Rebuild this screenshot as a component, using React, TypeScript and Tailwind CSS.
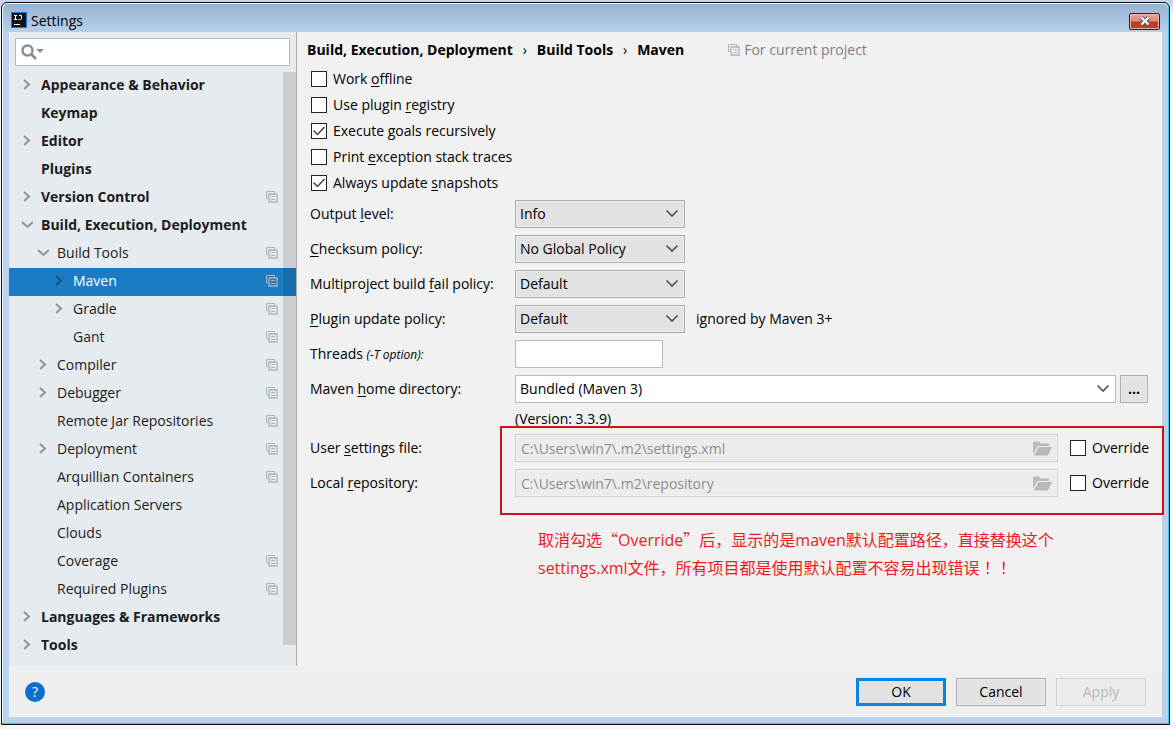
import React, { useState } from "react";

type TreeItem = {
  label: string;
  level: 0 | 1 | 2;
  state?: "open" | "closed";
  project?: boolean;
};

const TREE: TreeItem[] = [
  { label: "Appearance & Behavior", level: 0, state: "closed" },
  { label: "Keymap", level: 0 },
  { label: "Editor", level: 0, state: "closed" },
  { label: "Plugins", level: 0 },
  { label: "Version Control", level: 0, state: "closed", project: true },
  { label: "Build, Execution, Deployment", level: 0, state: "open" },
  { label: "Build Tools", level: 1, state: "open", project: true },
  { label: "Maven", level: 2, state: "closed", project: true },
  { label: "Gradle", level: 2, state: "closed", project: true },
  { label: "Gant", level: 2, project: true },
  { label: "Compiler", level: 1, state: "closed", project: true },
  { label: "Debugger", level: 1, state: "closed", project: true },
  { label: "Remote Jar Repositories", level: 1, project: true },
  { label: "Deployment", level: 1, state: "closed", project: true },
  { label: "Arquillian Containers", level: 1, project: true },
  { label: "Application Servers", level: 1 },
  { label: "Clouds", level: 1 },
  { label: "Coverage", level: 1, project: true },
  { label: "Required Plugins", level: 1, project: true },
  { label: "Languages & Frameworks", level: 0, state: "closed" },
  { label: "Tools", level: 0, state: "closed" },
];

const INDENT = ["pl-3", "pl-7", "pl-11"];

function ProjectIcon() {
  return (
    <svg width="12" height="12" viewBox="0 0 12 12" fill="none" stroke="#a9b4bc" className="shrink-0" aria-hidden="true">
      <path d="M2.500 7.500h-2v-7h8v2" />
      <path d="M3 3h8v8H3z" strokeWidth="1.300" />
      <path d="M5 5.500h4M5 8.500h4" />
    </svg>
  );
}

function TreeArrow({ state, selected }: { state?: "open" | "closed"; selected: boolean }) {
  return (
    <svg
      width="12"
      height="12"
      viewBox="0 0 12 12"
      fill="none"
      stroke={selected ? "#17517f" : "#8f9396"}
      strokeWidth="2"
      className="shrink-0"
      aria-hidden="true"
    >
      {state === "closed" && <path d="M3 1 8 5.500 3 10" />}
      {state === "open" && <path d="M1 3l5.500 5L12 3" />}
    </svg>
  );
}

function ComboArrow() {
  return (
    <svg
      width="14"
      height="9"
      viewBox="0 0 14 9"
      fill="none"
      stroke="#555"
      strokeWidth="1.700"
      className="pointer-events-none absolute top-[9px] right-1.5"
      aria-hidden="true"
    >
      <path d="M1.500 1.500 7 7l5.500-5.500" />
    </svg>
  );
}

function Mnemonic({ text }: { text: string }) {
  const [before, key, after] = text.split("_");
  return (
    <>
      {before}
      <span className="underline underline-offset-2">{key}</span>
      {after}
    </>
  );
}

function Check({ text, initial = false }: { text: React.ReactNode; initial?: boolean }) {
  const [checked, setChecked] = useState(initial);
  return (
    <label className="flex items-center gap-1.5 pl-px whitespace-nowrap">
      <span className="relative flex">
        <input
          type="checkbox"
          checked={checked}
          onChange={(e) => setChecked(e.target.checked)}
          className="size-4 appearance-none border border-[#222] bg-white"
        />
        {checked && (
          <svg
            width="16"
            height="16"
            viewBox="0 0 16 16"
            fill="none"
            stroke="#444"
            strokeWidth="1.500"
            className="pointer-events-none absolute inset-0"
            aria-hidden="true"
          >
            <path d="M2.500 7.500l4 4 7-7.500" />
          </svg>
        )}
      </span>
      <span>{text}</span>
    </label>
  );
}

function Row({ id, label, children }: { id: string; label: React.ReactNode; children: React.ReactNode }) {
  return (
    <div className="flex h-7 items-center">
      <label htmlFor={id} className="w-[205px] shrink-0 whitespace-nowrap">
        {label}
      </label>
      {children}
    </div>
  );
}

function Combo({ id, options }: { id: string; options: string[] }) {
  return (
    <span className="relative w-[170px]">
      <select
        id={id}
        className="block h-7 w-full appearance-none border border-[#adadad] bg-[#e2e2e2] pr-6 pl-1 shadow-[inset_0_0_0_1px_#ebebeb]"
      >
        {options.map((o) => (
          <option key={o}>{o}</option>
        ))}
      </select>
      <ComboArrow />
    </span>
  );
}

function PathRow({ id, label, value }: { id: string; label: string; value: string }) {
  return (
    <Row id={id} label={<Mnemonic text={label} />}>
      <span className="relative grow">
        <input
          id={id}
          disabled
          value={value}
          className="block h-7 w-full border border-[#cfcfcf] bg-[#ececec] pr-8 pl-[5px] text-[#8c8c8c] shadow-[inset_0_0_0_1px_#f1f1f1]"
        />
        <svg
          width="19"
          height="15"
          viewBox="0 0 19 15"
          fill="#b4babd"
          className="absolute top-[7px] right-1.5"
          aria-hidden="true"
        >
          <path d="M0 .5h6l1.500 2H16v2.500H4.500L0 13z" />
          <path d="M5.500 6H19l-4 8.500H.8z" />
        </svg>
      </span>
      <span className="ml-[11px] w-[79px]">
        <Check text="Override" />
      </span>
    </Row>
  );
}

function Sidebar() {
  const [selected, setSelected] = useState("Maven");
  return (
    <nav className="flex w-72 shrink-0 flex-col border-r border-[#a9a9a9] bg-[#e6ebef]">
      <label className="relative mx-1.5 mt-1.5 mb-1.5 flex">
        <input
          aria-label="Search settings"
          className="h-7 w-full border border-[#b5babd] bg-white pl-8 outline-none"
        />
        <svg
          width="23"
          height="16"
          viewBox="0 0 23 16"
          fill="none"
          className="pointer-events-none absolute top-1.5 left-1.5"
          aria-hidden="true"
        >
          <circle cx="6.500" cy="6.500" r="5" stroke="#8c8c8c" strokeWidth="2.400" />
          <path d="m10 10 5 5" stroke="#8c8c8c" strokeWidth="2.600" />
          <path d="M15 5h8l-4 4z" fill="#8c8c8c" />
        </svg>
      </label>
      <div className="relative pb-1.5">
        <ul>
          {TREE.map((item) => {
            const active = item.label === selected;
            return (
              <li key={item.label}>
                <button
                  onClick={() => setSelected(item.label)}
                  className={`flex h-7 w-full items-center pr-[18px] pb-0.5 text-left whitespace-nowrap ${INDENT[item.level]} ${
                    item.level === 0 ? "font-bold" : ""
                  } ${active ? "bg-[#1b7cc3] text-white" : "text-[#1c1c1c]"}`}
                >
                  <TreeArrow state={item.state} selected={active} />
                  <span className="ml-2 grow">{item.label}</span>
                  {item.project && <ProjectIcon />}
                </button>
              </li>
            );
          })}
        </ul>
        <div className="pointer-events-none absolute top-0 right-0 bottom-[21px] w-[13px] bg-[#00000b]/12" />
      </div>
    </nav>
  );
}

function MavenPage() {
  const policies = ["Default", "Always", "Never"];
  return (
    <main className="min-w-0 grow bg-[#f1f1f1] pr-3.5 pl-[13px] text-black">
      <header className="-ml-[3px] flex h-9 items-center whitespace-nowrap">
        <h1 className="flex font-bold">
          <span>Build, Execution, Deployment</span>
          <span className="w-6 text-center font-normal">›</span>
          <span>Build Tools</span>
          <span className="w-6 text-center font-normal">›</span>
          <span>Maven</span>
        </h1>
        <p className="ml-11 flex items-center gap-1 text-[#808080]">
          <ProjectIcon />
          For current project
        </p>
      </header>
      <div className="mt-px flex flex-col gap-1.5">
        <Check text={<Mnemonic text="Work _o_ffline" />} />
        <Check text={<Mnemonic text="Use plugin _r_egistry" />} />
        <Check initial text={<Mnemonic text="Execute _g_oals recursively" />} />
        <Check text={<Mnemonic text="Print _e_xception stack traces" />} />
        <Check initial text={<Mnemonic text="Always update _s_napshots" />} />
      </div>
      <div className="mt-[7px] flex flex-col gap-[7px]">
        <Row id="output" label={<Mnemonic text="Output _l_evel:" />}>
          <Combo id="output" options={["Info", "Debug", "Warn", "Error"]} />
        </Row>
        <Row id="checksum" label={<Mnemonic text="_C_hecksum policy:" />}>
          <Combo id="checksum" options={["No Global Policy", "Fail", "Warn"]} />
        </Row>
        <Row id="fail" label={<Mnemonic text="Multiproject build _f_ail policy:" />}>
          <Combo id="fail" options={policies} />
        </Row>
        <Row id="update" label={<Mnemonic text="_P_lugin update policy:" />}>
          <Combo id="update" options={policies} />
          <span className="ml-[11px]">ignored by Maven 3+</span>
        </Row>
        <Row
          id="threads"
          label={
            <>
              Threads <i className="text-xs">(-T option):</i>
            </>
          }
        >
          <input id="threads" className="h-7 w-37 border border-[#bbb] bg-white px-1" />
        </Row>
        <Row id="home" label={<Mnemonic text="Maven _h_ome directory:" />}>
          <span className="relative grow">
            <select id="home" className="block h-7 w-full appearance-none border border-[#bbb] bg-white pr-6 pl-1">
              <option>Bundled (Maven 3)</option>
              <option>Bundled (Maven 2)</option>
            </select>
            <ComboArrow />
          </span>
          <button className="ml-1 h-7 w-7 border border-[#adadad] bg-[#e2e2e2] font-bold shadow-[inset_0_0_0_1px_#ebebeb]">
            ...
          </button>
        </Row>
      </div>
      <p className="ml-[205px] h-[31px] pt-1.5 leading-5">(Version: 3.3.9)</p>
      <section className="relative flex flex-col gap-[7px]">
        <PathRow id="settings" label="User _s_ettings file:" value="C:\Users\win7\.m2\settings.xml" />
        <PathRow id="repository" label="Local _r_epository:" value="C:\Users\win7\.m2\repository" />
        <div className="pointer-events-none absolute -top-2 -right-4 -bottom-[18px] left-[190px] border-2 border-[#c81414]" />
      </section>
      <p lang="zh-CN" className="mt-[29px] ml-[228px] text-base leading-[27px] text-[#ed1c24]">
        取消勾选<span className="font-['Noto_Sans_CJK_SC',sans-serif]">“</span>Override
        <span className="font-['Noto_Sans_CJK_SC',sans-serif]">”</span>后，显示的是maven默认配置路径，直接替换这个
        <br />
        settings.xml文件，所有项目都是使用默认配置不容易出现错误
        <span lang="zh-TW" className="font-['Noto_Sans_CJK_TC',sans-serif]">！！</span>
      </p>
    </main>
  );
}

export default function App() {
  return (
    <div className="flex min-h-screen flex-col bg-linear-to-b from-[#c5d0e4] from-0% via-[#f4f7fb] via-2% to-[#f4f7fb] pt-0.5 pr-[3px] pb-1 pl-px font-['Open_Sans','Noto_Sans_CJK_SC',sans-serif] text-sm leading-5">
      <div className="flex grow flex-col rounded-t-md border border-[#111] bg-[#b9d1ea] px-[7px] pb-[7px] shadow-[inset_-1px_-1px_0_#35c5e8,inset_1px_1px_0_#e8f2fb]">
        <div className="-mx-1.5 mt-px flex h-7 shrink-0 items-center rounded-t-md bg-linear-to-b from-[#98b3d2] to-[#b7d0ea] pr-2 pl-2">
          <svg width="16" height="16" viewBox="0 0 16 16" className="mt-1" aria-hidden="true">
            <path d="M0 0h16v16H0z" fill="#1b74d2" />
            <path d="M1 1h14v14H1z" fill="#111218" />
            <path d="M3 3.500h3M4.500 3.500v4M3 7.500h3M8 3.500h2.500v3q0 1-1 1H7.500M3 12.500h6" stroke="#fff" fill="none" />
          </svg>
          <span className="ml-1 grow pt-1.5 text-black">Settings</span>
          <button
            aria-label="Close"
            className="mt-1.5 flex h-[17px] w-[31px] items-center justify-center rounded-xs border border-[#4a1424] bg-linear-to-b from-[#e9a79b] from-0% via-[#dc8a7b] via-45% to-[#b93f25] to-55% shadow-[inset_0_0_0_1px_#eab5aa]"
          >
            <svg width="12" height="10" viewBox="0 0 12 10" fill="none" aria-hidden="true">
              <path d="m2.500 1.500 7 7m0-7-7 7" stroke="#4d5063" strokeWidth="4" />
              <path d="m2.500 1.500 7 7m0-7-7 7" stroke="#fff" strokeWidth="2.200" />
            </svg>
          </button>
        </div>
        <div className="flex grow">
          <Sidebar />
          <MavenPage />
        </div>
        <footer className="flex h-[51px] shrink-0 items-center gap-2.5 bg-[#efefef] pr-4 pl-4">
          <button
            aria-label="Help"
            className="mr-auto flex size-5 items-center justify-center rounded-full bg-[#0a6fcf] text-sm text-white"
          >
            ?
          </button>
          <button className="h-7 w-[90px] border-3 border-[#0a84e0] bg-[#e2e2e2] text-black">OK</button>
          <button className="h-7 w-[90px] border border-[#adadad] bg-[#e2e2e2] text-black shadow-[inset_0_0_0_1px_#ebebeb]">
            Cancel
          </button>
          <button
            disabled
            className="h-7 w-[90px] border border-[#cfcfcf] bg-[#ebebeb] text-[#b8b8b8] shadow-[inset_0_0_0_1px_#f1f1f1]"
          >
            Apply
          </button>
        </footer>
      </div>
    </div>
  );
}
